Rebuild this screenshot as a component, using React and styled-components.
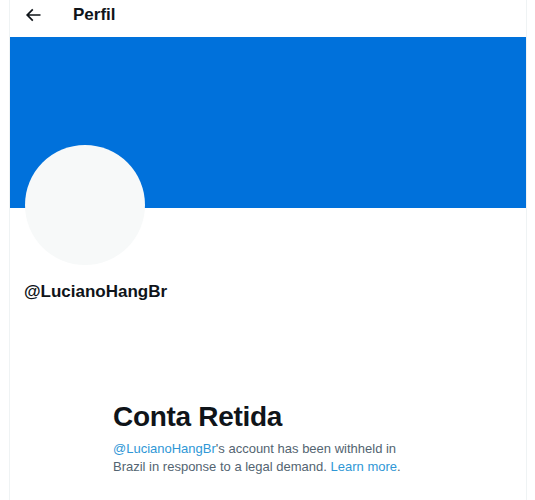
import React from 'react'
import styled, { createGlobalStyle } from 'styled-components'

const GlobalStyle = createGlobalStyle`
  html, body {
    margin: 0;
    padding: 0;
    background: #ffffff;
  }
  body {
    font-family: 'Liberation Sans', Arial, sans-serif;
    color: #0f1419;
  }
`

const Column = styled.div`
  margin-left: 9px;
  width: 516px;
  min-height: 500px;
  border-left: 1px solid #eff3f4;
  border-right: 1px solid #eff3f4;
  display: flex;
  flex-direction: column;
`

const Header = styled.header`
  height: 37px;
  display: flex;
  align-items: center;
  padding-left: 13px;
  gap: 30px;
`

const BackButton = styled.button`
  border: 0;
  background: none;
  padding: 0;
  width: 20px;
  height: 20px;
  display: flex;
  color: #0f1419;
  margin-top: -7px;
`

const Title = styled.h2`
  margin: 0;
  margin-top: -7px;
  font-size: 17px;
  font-weight: 700;
  line-height: 20px;
`

const Banner = styled.div`
  height: 171px;
  background: #0071db;
`

const Avatar = styled.div`
  width: 120px;
  height: 120px;
  border-radius: 50%;
  background: #f7f9f9;
  margin: -63px 0 0 15px;
`

const Handle = styled.div`
  margin: 17px 0 0 14px;
  font-size: 17px;
  font-weight: 700;
  line-height: 20px;
`

const Notice = styled.section`
  margin: 99px 0 0 103px;
  width: 300px;
  display: flex;
  flex-direction: column;
  gap: 7px;
`

const NoticeTitle = styled.h1`
  margin: 0;
  font-size: 28px;
  font-weight: 700;
  line-height: 32px;
  letter-spacing: -0.3px;
`

const NoticeText = styled.p`
  margin: 0;
  font-size: 13px;
  line-height: 18px;
  color: #536471;
`

const Link = styled.a`
  color: #2f97d6;
  text-decoration: none;
`

const BackIcon = () => (
  <svg viewBox="0 0 24 24" width="20" height="20" fill="currentColor">
    <path d="M7.414 13l5.043 5.04-1.414 1.42L3.586 12l7.457-7.46 1.414 1.42L7.414 11H21v2H7.414z" />
  </svg>
)

export default function App() {
  return (
    <>
      <GlobalStyle />
      <Column>
        <Header>
          <BackButton aria-label="Voltar">
            <BackIcon />
          </BackButton>
          <Title>Perfil</Title>
        </Header>
        <Banner />
        <Avatar />
        <Handle>@LucianoHangBr</Handle>
        <Notice>
          <NoticeTitle>Conta Retida</NoticeTitle>
          <NoticeText>
            <Link href="#">@LucianoHangBr</Link>'s account has been withheld in
            Brazil in response to a legal demand. <Link href="#">Learn more</Link>.
          </NoticeText>
        </Notice>
      </Column>
    </>
  )
}
